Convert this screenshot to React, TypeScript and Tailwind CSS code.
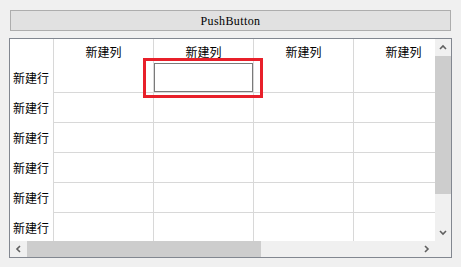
import React from "react";

const cols = ["新建列", "新建列", "新建列", "新建列"];
const rows = [0, 1, 2, 3, 4, 5];

const cjk = { fontFamily: '"Noto Sans CJK SC", "Noto Sans", sans-serif' };

const Chevron: React.FC<{ dir: "up" | "down" | "left" | "right" }> = ({ dir }) => {
  const d = {
    up: "M1 5 L4 2 L7 5",
    down: "M1 2 L4 5 L7 2",
    left: "M5 1 L2 4 L5 7",
    right: "M2 1 L5 4 L2 7",
  }[dir];
  return (
    <svg width="8" height="8" viewBox="0 0 8 8">
      <path d={d} fill="none" stroke="#606060" strokeWidth="1.6" />
    </svg>
  );
};

const App: React.FC = () => {
  return (
    <div className="w-[461px] h-[267px] bg-[#f0f0f0] pt-[10px] flex flex-col overflow-hidden" style={cjk}>
      <button
        className="ml-[10px] w-[441px] h-[21px] border border-[#adadad] bg-[#e1e1e1] text-[12px] tracking-[0.4px] text-black flex items-center justify-center"
        style={{ fontFamily: '"Liberation Serif", "DejaVu Serif", serif' }}
      >
        PushButton
      </button>

      <div className="ml-[9px] mt-[7px] w-[443px] h-[220px] border border-[#828790] bg-white flex flex-col">
        <div className="flex flex-1 min-h-0">
          <div className="flex-1 overflow-hidden">
            <div className="flex h-[24px] text-[12px] text-black">
              <div className="w-[44px] shrink-0 border-r border-[#d8d8d8]" />
              {cols.map((c, i) => (
                <div key={i} className="w-[100px] shrink-0 border-r border-[#d8d8d8] flex items-center justify-center pt-[2px]">
                  {c}
                </div>
              ))}
            </div>
            {rows.map((r) => (
              <div key={r} className="flex h-[30px] text-[12px] text-black">
                <div className="w-[44px] shrink-0 flex items-center pl-[3px] border-r border-[#d8d8d8]">新建行</div>
                {cols.map((_, i) => (
                  <div key={i} className="w-[100px] shrink-0 border-r border-b border-[#d8d8d8] relative">
                    {r === 0 && i === 1 && (
                      <>
                        <div className="absolute inset-0 border border-[#7a7a7a] bg-white" />
                        <div className="absolute z-10 left-[-11px] top-[-5px] w-[120px] h-[40px] border-[3px] border-[#e8202a]" />
                      </>
                    )}
                  </div>
                ))}
              </div>
            ))}
          </div>
          <div className="w-[16px] shrink-0 bg-[#f0f0f0] flex flex-col items-center">
            <div className="h-[17px] flex items-center justify-center">
              <Chevron dir="up" />
            </div>
            <div className="w-full h-[138px] bg-[#cdcdcd]" />
            <div className="flex-1" />
            <div className="h-[17px] flex items-center justify-center">
              <Chevron dir="down" />
            </div>
          </div>
        </div>
        <div className="h-[16px] shrink-0 flex bg-[#f0f0f0]">
          <div className="w-[17px] flex items-center justify-center">
            <Chevron dir="left" />
          </div>
          <div className="w-[234px] bg-[#cdcdcd]" />
          <div className="flex-1" />
          <div className="w-[17px] flex items-center justify-center">
            <Chevron dir="right" />
          </div>
          <div className="w-[16px]" />
        </div>
      </div>
    </div>
  );
};

export default App;
